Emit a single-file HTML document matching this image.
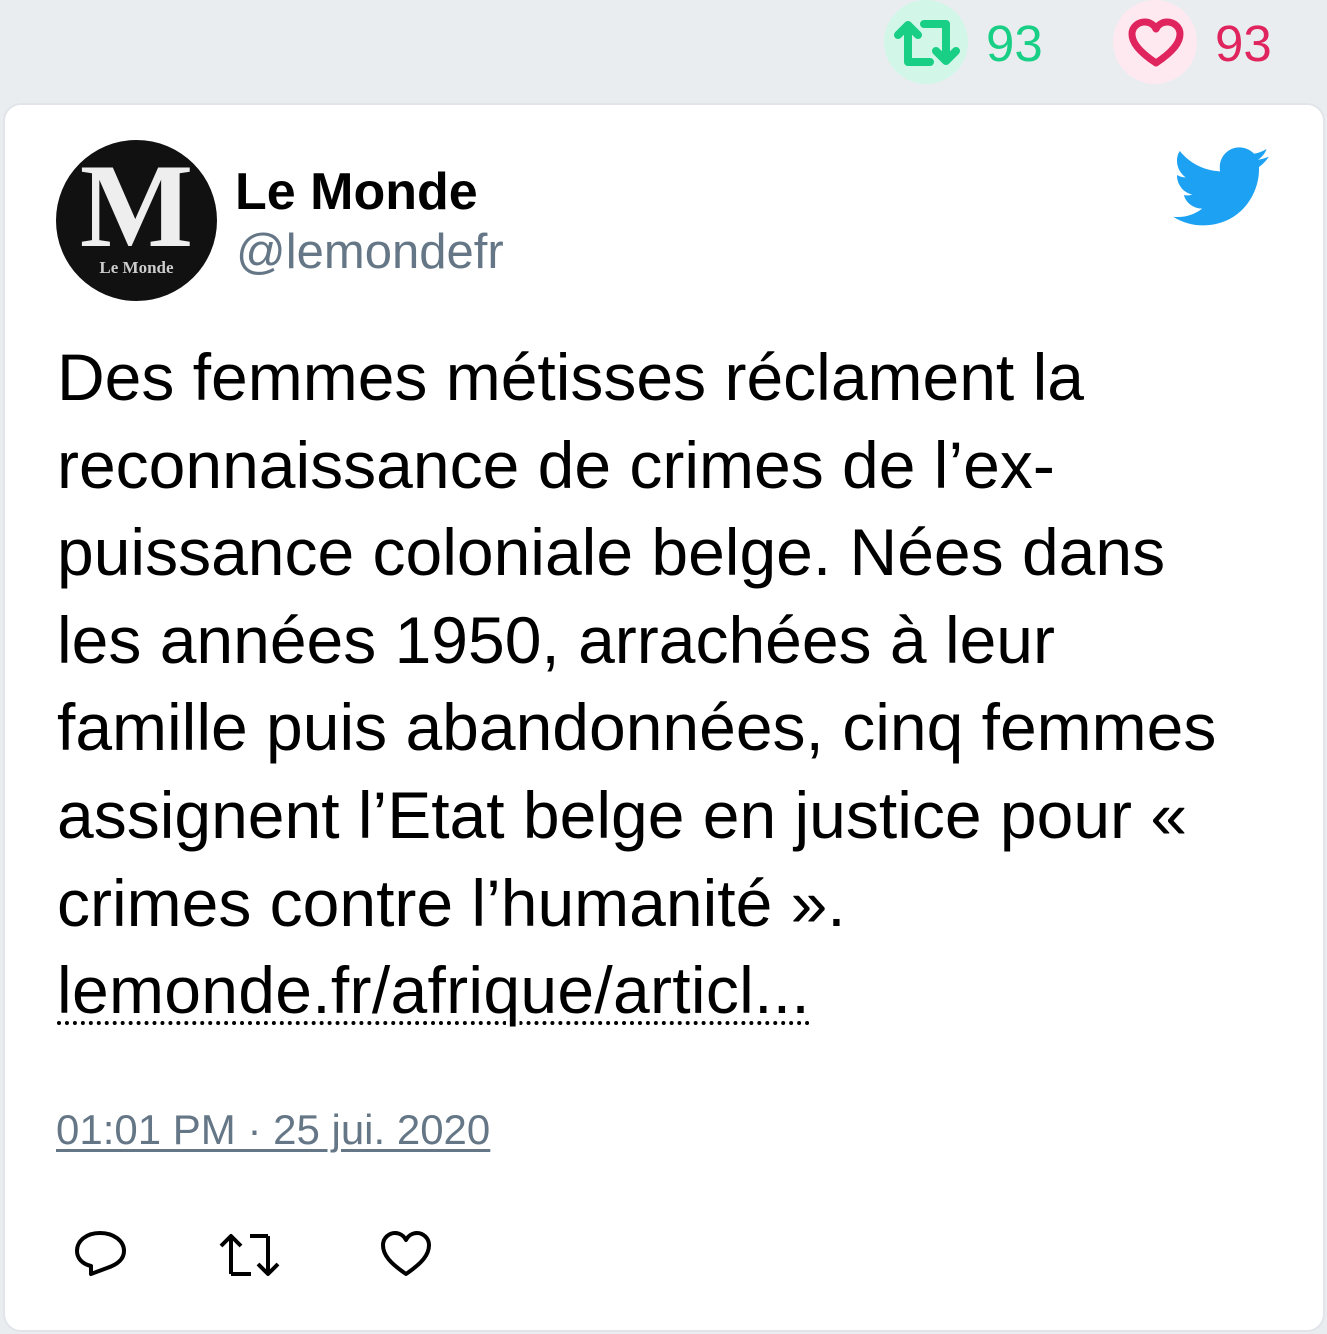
<!DOCTYPE html>
<html><head><meta charset="utf-8"><style>
body{margin:0;width:1327px;height:1334px;background:#e9edf0;font-family:"Liberation Sans",sans-serif;position:relative;overflow:hidden}
.a{position:absolute}
.card{left:3px;top:103px;width:1318px;height:1225px;background:#fff;border:2px solid #e1e4e8;border-radius:18px}
.txt{left:57px;top:334px;width:1180px;font-size:66px;line-height:87.6px;color:#000}
.lnk{text-decoration:underline dotted;text-decoration-thickness:4px;text-underline-offset:8px;letter-spacing:0.3px}
</style></head><body>
<div class="a" style="left:884px;top:0;width:84px;height:84px;border-radius:50%;background:#d2f7e8"></div>
<svg class="a" style="left:894px;top:18px" width="66" height="50" viewBox="0 0 66 50"><g fill="none" stroke="#19cf86" stroke-width="8" stroke-linecap="round" stroke-linejoin="round"><path d="M14 44V8M4 17l10-10 10 10M14 44h22"/><path d="M52 6v36M42 33l10 10 10-10M52 6H30"/></g></svg>
<div class="a" style="left:986px;top:14px;font-size:51px;color:#19cf86">93</div>
<div class="a" style="left:1113px;top:0;width:84px;height:84px;border-radius:50%;background:#fde9ef"></div>
<svg class="a" style="left:1128px;top:18px" width="56" height="50" viewBox="0 0 56 50"><path d="M28 45C10 33 4 24 4 16 4 9 10 4 17 4c5 0 9 3 11 7 2-4 6-7 11-7 7 0 13 5 13 12 0 8-6 17-24 29z" fill="none" stroke="#e0245e" stroke-width="7" stroke-linejoin="round"/></svg>
<div class="a" style="left:1215px;top:14px;font-size:51px;color:#e0245e">93</div>
<div class="a card"></div>
<div class="a" style="left:56px;top:140px;width:161px;height:161px;border-radius:50%;background:#111;overflow:hidden">
<div class="a" style="left:0;top:6px;width:161px;text-align:center;font-family:'Liberation Serif',serif;font-weight:bold;font-size:120px;color:#eee;line-height:120px">M</div>
<div class="a" style="left:0;top:118px;width:161px;text-align:center;font-family:'Liberation Serif',serif;font-weight:bold;font-size:17px;color:#ccc">Le Monde</div></div>
<div class="a" style="left:235px;top:162px;font-size:52px;font-weight:bold;color:#000">Le Monde</div>
<div class="a" style="left:236px;top:224px;font-size:49px;color:#657786">@lemondefr</div>
<svg class="a" style="left:1173px;top:147px" width="96" height="80" viewBox="0 0 24 20"><path fill="#1da1f2" d="M24 2.4c-.9.4-1.8.6-2.8.8 1-.6 1.8-1.6 2.2-2.7-1 .6-2 1-3.1 1.2C19.3.7 18 .1 16.6.1c-2.7 0-4.9 2.2-4.9 4.9 0 .4 0 .8.1 1.1C7.7 5.9 4.1 4 1.7 1 1.2 1.7 1 2.6 1 3.5c0 1.7.9 3.2 2.2 4.1-.8 0-1.6-.2-2.2-.6v.1c0 2.4 1.7 4.4 3.9 4.8-.4.1-.8.2-1.3.2-.3 0-.6 0-.9-.1.6 2 2.4 3.4 4.6 3.4-1.7 1.3-3.8 2.1-6.1 2.1-.4 0-.8 0-1.2-.1 2.2 1.4 4.8 2.2 7.5 2.2 9.1 0 14-7.5 14-14v-.6c1-.7 1.8-1.600 2.5-2.6z"/></svg>
<div class="a txt">Des femmes métisses réclament la reconnaissance de crimes de l’ex-puissance coloniale belge. Nées dans les années 1950, arrachées à leur famille puis abandonnées, cinq femmes assignent l’Etat belge en justice pour « crimes contre l’humanité ». <span class="lnk">lemonde.fr/afrique/articl...</span></div>
<div class="a" style="left:56px;top:1106px;font-size:42px;color:#657786;text-decoration:underline;text-decoration-thickness:3px;text-underline-offset:5px">01:01 PM · 25 jui. 2020</div>
<svg class="a" style="left:74px;top:1228px" width="54" height="52" viewBox="0 0 54 52"><path d="M17 46V38C8 36 3 30 3 23 3 13 12 5 26 5s24 8 24 18c0 9-8 14-17 17z" fill="none" stroke="#000" stroke-width="4" stroke-linejoin="round"/></svg>
<svg class="a" style="left:218px;top:1230px" width="66" height="52" viewBox="0 0 66 52"><g fill="none" stroke="#000" stroke-width="4" stroke-linejoin="round"><path d="M13 44V6M3 16l10-10 10 10M13 44h20"/><path d="M50 6v38M40 34l10 10 10-10M50 6H32"/></g></svg>
<svg class="a" style="left:380px;top:1230px" width="52" height="48" viewBox="0 0 52 48"><path d="M26 44C10 33 3 25 3 15 3 8 9 3 15 3c5 0 9 3 11 7 2-4 6-7 11-7 6 0 12 5 12 12 0 10-7 18-23 29z" fill="none" stroke="#000" stroke-width="4" stroke-linejoin="round"/></svg>
</body></html>
